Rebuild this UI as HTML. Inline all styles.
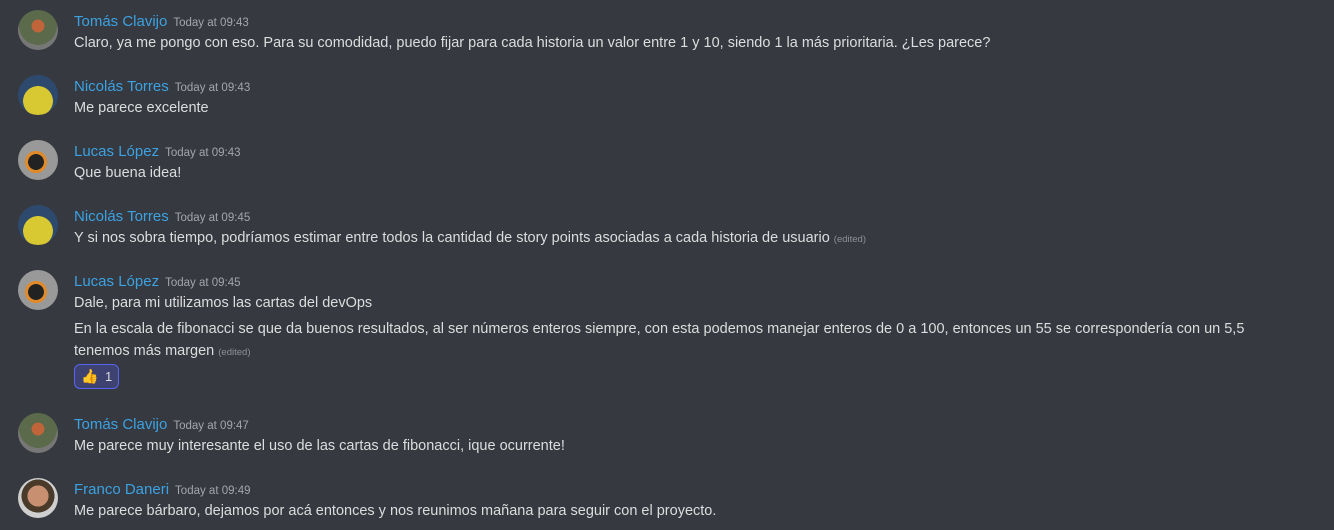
<!DOCTYPE html>
<html><head><meta charset="utf-8"><style>
body{margin:0;width:1334px;height:530px;background:#36393f;font-family:"Liberation Sans",sans-serif;position:relative;overflow:hidden}
.av{position:absolute;left:18px;width:40px;height:40px;border-radius:50%;overflow:hidden}
.n{position:absolute;left:74px;color:#3ba2e3;font-size:15px;white-space:nowrap}
.n span{color:#a3a6aa;font-size:11.5px;margin-left:6px}
.t{position:absolute;left:74px;color:#dcddde;font-size:14.5px;white-space:nowrap}
.e{color:#8e9297;font-size:9.5px}
.r{position:absolute;left:74px;top:364px;width:45px;height:25px;box-sizing:border-box;border:1px solid #5865f2;background:#3d4270;border-radius:6px;color:#dcddde;font-size:13px}
</style></head><body>
<div class="av" style="top:10px;background:radial-gradient(circle at 50% 40%,#c0643a 0 20%,#5a6a4a 21% 60%,#777 61%)"></div>
<div class="n" style="top:13px">Tomás Clavijo<span>Today at 09:43</span></div>
<div class="t" style="top:35px">Claro, ya me pongo con eso. Para su comodidad, puedo fijar para cada historia un valor entre 1 y 10, siendo 1 la más prioritaria. ¿Les parece?</div>

<div class="av" style="top:75px;background:radial-gradient(circle at 50% 65%,#d8c832 0 45%,#2d4a6e 46%)"></div>
<div class="n" style="top:78px">Nicolás Torres<span>Today at 09:43</span></div>
<div class="t" style="top:100px">Me parece excelente</div>

<div class="av" style="top:140px;background:radial-gradient(circle at 45% 55%,#222 0 25%,#e08a2a 26% 35%,#999 36%)"></div>
<div class="n" style="top:143px">Lucas López<span>Today at 09:43</span></div>
<div class="t" style="top:165px">Que buena idea!</div>

<div class="av" style="top:205px;background:radial-gradient(circle at 50% 65%,#d8c832 0 45%,#2d4a6e 46%)"></div>
<div class="n" style="top:208px">Nicolás Torres<span>Today at 09:45</span></div>
<div class="t" style="top:230px">Y si nos sobra tiempo, podríamos estimar entre todos la cantidad de story points asociadas a cada historia de usuario <span class="e">(edited)</span></div>

<div class="av" style="top:270px;background:radial-gradient(circle at 45% 55%,#222 0 25%,#e08a2a 26% 35%,#999 36%)"></div>
<div class="n" style="top:273px">Lucas López<span>Today at 09:45</span></div>
<div class="t" style="top:295px">Dale, para mi utilizamos las cartas del devOps</div>
<div class="t" style="top:321px">En la escala de fibonacci se que da buenos resultados, al ser números enteros siempre, con esta podemos manejar enteros de 0 a 100, entonces un 55 se correspondería con un 5,5</div>
<div class="t" style="top:343px">tenemos más margen <span class="e">(edited)</span></div>
<div class="r"><span style="position:absolute;left:6px;top:3px;color:#f5c542;font-size:14px">👍</span><span style="position:absolute;left:30px;top:4px">1</span></div>

<div class="av" style="top:413px;background:radial-gradient(circle at 50% 40%,#c0643a 0 20%,#5a6a4a 21% 60%,#777 61%)"></div>
<div class="n" style="top:416px">Tomás Clavijo<span>Today at 09:47</span></div>
<div class="t" style="top:438px">Me parece muy interesante el uso de las cartas de fibonacci, ique ocurrente!</div>

<div class="av" style="top:478px;background:radial-gradient(circle at 50% 45%,#c89070 0 35%,#4a3a2a 36% 55%,#cfcfcf 56%)"></div>
<div class="n" style="top:481px">Franco Daneri<span>Today at 09:49</span></div>
<div class="t" style="top:503px">Me parece bárbaro, dejamos por acá entonces y nos reunimos mañana para seguir con el proyecto.</div>
</body></html>
